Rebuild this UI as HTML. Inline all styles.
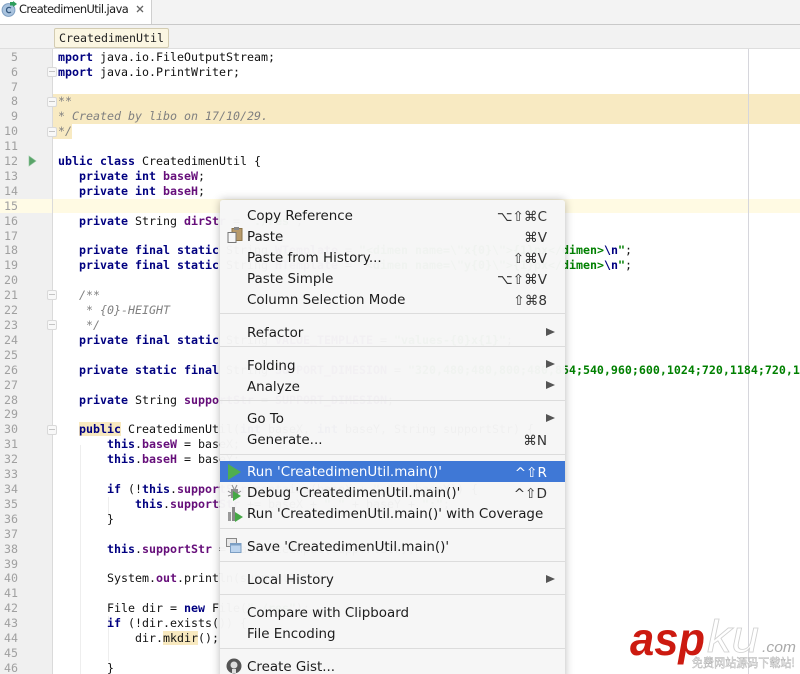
<!DOCTYPE html>
<html><head><meta charset="utf-8">
<style>
html,body{margin:0;padding:0;width:800px;height:674px;overflow:hidden;background:#fff}
#a{position:absolute;left:0;top:0;width:800px;height:674px;overflow:hidden;filter:blur(.35px)}
.abs,pre{position:absolute;margin:0}
pre{font-family:"DejaVu Sans Mono","Liberation Mono",monospace;font-size:11.63px;line-height:14.9px;white-space:pre;color:#111}
b{color:#000080;font-weight:bold}
i.f{color:#660e7a;font-weight:bold;font-style:normal}
u{color:#008000;font-weight:bold;text-decoration:none}
em{color:#808080;font-style:italic}
s{text-decoration:none;font-style:italic;color:#660e7a}
mark{background:#f8e9bf;color:inherit}
#m{position:absolute;left:220px;top:200px;width:345px;height:480px;background:rgba(246,246,246,.975);box-shadow:0 0 9px rgba(0,0,0,.28);border-radius:3px 3px 0 0;font-family:"DejaVu Sans",sans-serif;font-size:13.43px;color:#1c1c1c}
#m .t{position:absolute;left:27px;white-space:pre;line-height:20px;height:20px;margin-top:2px}
#m .k{position:absolute;right:18px;white-space:pre;line-height:20px;height:20px;margin-top:2px;color:#333;font-size:13.6px;font-family:"DejaVu Sans",sans-serif}
#m .s{position:absolute;left:0;right:0;height:1px;background:#dcdcdc}
#m .r{position:absolute;left:326px;width:0;height:0;margin-top:1px;border-left:9px solid #555;border-top:4.5px solid transparent;border-bottom:4.5px solid transparent}
.fm{position:absolute;left:47px;width:8px;height:8px;border:1px solid #d9d9d9;background:#f8f8f8;border-radius:2px}
.fm:after{content:"";position:absolute;left:1px;right:1px;top:3px;height:1px;background:#c4c4c4}
</style></head><body><div id="a">
<div class="abs" style="left:0;top:0;width:800px;height:24px;background:#f3f3f3"></div>
<div class="abs" style="left:0;top:0;width:151px;height:24px;background:#fff;border-right:1px solid #cfcfcf"></div>
<div class="abs" style="left:0;top:24px;width:800px;height:1px;background:#c9c9c9"></div>
<div class="abs" style="left:0;top:25px;width:800px;height:23px;background:#f2f2f2;border-bottom:1px solid #dedede"></div>
<svg class="abs" style="left:1px;top:1px" width="16" height="16" viewBox="0 0 16 16"><circle cx="7.5" cy="9" r="6.4" fill="#a9c3de" stroke="#7f9fc2"/><path d="M10 7C8 5.6 5.5 6.6 5.5 9s2.5 3.4 4.5 2" fill="none" stroke="#35597f" stroke-width="1.2"/><path d="M9 1h3V0l4 3-4 3V4.500H9z" fill="#2f9e5c"/></svg>
<div class="abs" style="left:19px;top:1px;font:11.4px/17px 'DejaVu Sans',sans-serif;color:#1a1a1a;letter-spacing:-.55px;white-space:pre">CreatedimenUtil.java</div>
<svg class="abs" style="left:136px;top:5px" width="8" height="8"><path d="M1 1l6 6M7 1L1 7" stroke="#666" stroke-width="1.300"/></svg>
<div class="abs" style="left:54px;top:28px;width:113px;height:18px;background:#fbf6e2;border:1px solid #d3ccb2;border-radius:2px"></div>
<pre style="left:59px;top:31px;color:#222">CreatedimenUtil</pre>

<div class="abs" style="left:0;top:49px;width:52px;height:625px;background:#f0f0f0;border-right:1px solid #dadada"></div>
<div class="abs" style="left:0;top:199px;width:52px;height:14px;background:#fffbe6"></div>
<div class="abs" style="left:53px;top:199px;width:747px;height:14px;background:#fffae3"></div>
<div class="abs" style="left:53px;top:94px;width:747px;height:30px;background:#f8eac2"></div>
<div class="abs" style="left:53px;top:124px;width:19px;height:15px;background:#f8eac2"></div>
<div class="abs" style="left:748px;top:49px;width:1px;height:625px;background:#d6d6dc"></div>
<div class="abs" style="left:80px;top:445px;width:1px;height:229px;background:#eee"></div>
<div class="abs" style="left:108px;top:497px;width:1px;height:20px;background:#eee"></div>
<div class="abs" style="left:108px;top:616px;width:1px;height:45px;background:#eee"></div>

<pre style="left:0;top:49.700px;width:18px;text-align:right;color:#a0a0a0">5
6
7
8
9
10
11
12
13
14
15
16
17
18
19
20
21
22
23
24
25
26
27
28
29
30
31
32
33
34
35
36
37
38
39
40
41
42
43
44
45
46</pre>

<pre style="left:58px;top:49.700px"><b>mport</b> java.io.FileOutputStream;
<b>mport</b> java.io.PrintWriter;

<em>**</em>
<em>* Created by libo on 17/10/29.</em>
<em>*/</em>

<b>ublic class</b> CreatedimenUtil {
   <b>private int</b> <i class="f">baseW</i>;
   <b>private int</b> <i class="f">baseH</i>;

   <b>private</b> String <i class="f">dirStr</i> = <u>"./res"</u>;

   <b>private final static</b> String <i class="f">WTemplate</i> = <u>"&lt;dimen name=\"x{0}\"&gt;{1}px&lt;/dimen&gt;</u><b>\n</b><u>"</u>;
   <b>private final static</b> String <i class="f">HTemplate</i> = <u>"&lt;dimen name=\"y{0}\"&gt;{1}px&lt;/dimen&gt;</u><b>\n</b><u>"</u>;

   <em>/**</em>
   <em> * {0}-HEIGHT</em>
   <em> */</em>
   <b>private final static</b> String <s><i class="f">VALUE_TEMPLATE</i></s> = <u>"values-{0}x{1}"</u>;

   <b>private static final</b> String <s><i class="f">SUPPORT_DIMESION</i></s> = <u>"320,480;480,800;480,854;540,960;600,1024;720,1184;720,1196;</u>

   <b>private</b> String <i class="f">supportStr</i> = <s><i class="f">SUPPORT_DIMESION</i></s>;

   <b><mark>public</mark></b> CreatedimenUtil(<b>int</b> baseX, <b>int</b> baseY, String supportStr) {
       <b>this</b>.<i class="f">baseW</i> = baseX;
       <b>this</b>.<i class="f">baseH</i> = baseY;

       <b>if</b> (!<b>this</b>.<i class="f">supportStr</i>.contains(baseX + <u>","</u> + baseY)) {
           <b>this</b>.<i class="f">supportStr</i> += baseX + <u>","</u> + baseY + <u>";"</u>;
       }

       <b>this</b>.<i class="f">supportStr</i> = validateInput(supportStr);

       System.<s><i class="f">out</i></s>.println(supportStr);

       File dir = <b>new</b> File(<u>"./res"</u>);
       <b>if</b> (!dir.exists()) {
           dir.<mark>mkdir</mark>();

       }</pre>

<svg class="abs" style="left:28px;top:155px" width="9" height="12"><path d="M1 1l7 5-7 5z" fill="#5aa469" stroke="#8dc49a" stroke-width=".6"/></svg>
<div class="fm" style="top:67px"></div><div class="fm" style="top:97px"></div><div class="fm" style="top:127px"></div>
<div class="fm" style="top:290px"></div><div class="fm" style="top:320px"></div><div class="fm" style="top:425px"></div>

<div id="m">
<div class="t" style="top:5px">Copy Reference</div><div class="k" style="top:5px">⌥⇧⌘C</div>
<svg class="abs" style="left:7px;top:27px" width="16" height="17" viewBox="0 0 16 17"><rect x="5" y="1.500" width="10" height="12" fill="#b89a6a" stroke="#8c7449"/><rect x="7" y="0" width="5" height="3" fill="#888"/><rect x="1" y="5.500" width="8" height="10" fill="#f6f6f6" stroke="#777"/></svg>
<div class="t" style="top:26px">Paste</div><div class="k" style="top:26px">⌘V</div>
<div class="t" style="top:47px">Paste from History...</div><div class="k" style="top:47px">⇧⌘V</div>
<div class="t" style="top:68px">Paste Simple</div><div class="k" style="top:68px">⌥⇧⌘V</div>
<div class="t" style="top:89px">Column Selection Mode</div><div class="k" style="top:89px">⇧⌘8</div>
<div class="s" style="top:113px"></div>
<div class="t" style="top:122px">Refactor</div><div class="r" style="top:127px"></div>
<div class="s" style="top:146px"></div>
<div class="t" style="top:155px">Folding</div><div class="r" style="top:159px"></div>
<div class="t" style="top:176px">Analyze</div><div class="r" style="top:180px"></div>
<div class="s" style="top:200px"></div>
<div class="t" style="top:208px">Go To</div><div class="r" style="top:213px"></div>
<div class="t" style="top:229px">Generate...</div><div class="k" style="top:229px">⌘N</div>
<div class="s" style="top:254px"></div>
<div class="abs" style="left:0;top:261px;width:345px;height:21px;background:#3f78d6"></div>
<svg class="abs" style="left:7px;top:263px" width="15" height="18" viewBox="0 0 15 18"><path d="M1 1l13 8-13 8z" fill="#4fae4f"/></svg>
<div class="t" style="top:261px;color:#fff">Run 'CreatedimenUtil.main()'</div><div class="k" style="top:261px;color:#fff">^⇧R</div>
<svg class="abs" style="left:7px;top:284px" width="16" height="18" viewBox="0 0 16 18"><path d="M4 5h7v9H4z" fill="#8d8d8d"/><path d="M5 1l2 4M10 1L8 5M1 7l3 2M1 12l3-1M14 7l-3 2" stroke="#8d8d8d" fill="none"/><path d="M6 7l8 5-8 5z" fill="#46a846"/></svg>
<div class="t" style="top:282px">Debug 'CreatedimenUtil.main()'</div><div class="k" style="top:282px">^⇧D</div>
<svg class="abs" style="left:7px;top:305px" width="16" height="18" viewBox="0 0 16 18"><rect x="1" y="7" width="3" height="9" fill="#9a9a9a"/><rect x="5" y="2" width="3" height="14" fill="#8a8a8a"/><path d="M8 7l8 5-8 5z" fill="#46a846"/></svg>
<div class="t" style="top:303px">Run 'CreatedimenUtil.main()' with Coverage</div>
<div class="s" style="top:328px"></div>
<svg class="abs" style="left:6px;top:338px" width="16" height="16" viewBox="0 0 16 16"><rect x=".5" y=".5" width="10" height="8" fill="#e8e8e8" stroke="#888"/><rect x="4.500" y="5.500" width="10.500" height="9" fill="#bcd4ee" stroke="#7c9fc4"/><rect x="4.500" y="5.500" width="10.500" height="2" fill="#7c9fc4"/></svg>
<div class="t" style="top:336px">Save 'CreatedimenUtil.main()'</div>
<div class="s" style="top:361px"></div>
<div class="t" style="top:369px">Local History</div><div class="r" style="top:374px"></div>
<div class="s" style="top:394px"></div>
<div class="t" style="top:402px">Compare with Clipboard</div>
<div class="t" style="top:423px">File Encoding</div>
<div class="s" style="top:448px"></div>
<svg class="abs" style="left:6px;top:458px" width="16" height="16" viewBox="0 0 16 16"><circle cx="8" cy="8" r="7.500" fill="#555"/><circle cx="8" cy="7" r="3.500" fill="#ddd"/><path d="M6 11h4v4H6z" fill="#ddd"/></svg>
<div class="t" style="top:456px">Create Gist...</div>
</div>

<svg class="abs" style="left:620px;top:610px" width="180" height="64" viewBox="0 0 180 64">
<text x="10" y="45" font-family="Liberation Sans" font-weight="bold" font-style="italic" font-size="46" fill="#cc1a10" textLength="75" lengthAdjust="spacingAndGlyphs">asp</text>
<text x="87" y="42" font-family="Liberation Sans" font-style="italic" font-size="45" fill="#fff" stroke="#d0d0d0" stroke-width=".8" textLength="52" lengthAdjust="spacingAndGlyphs">ku</text>
<text x="142" y="42" font-family="Liberation Sans" font-style="italic" font-size="15" fill="#aaa" textLength="34" lengthAdjust="spacingAndGlyphs">.com</text>
<text x="72" y="57" font-family="Noto Sans CJK SC,sans-serif" font-size="12" fill="#f4f4f4" stroke="#aaa" stroke-width=".4" textLength="103" lengthAdjust="spacingAndGlyphs">免费网站源码下载站!</text>
</svg>
</div></body></html>
